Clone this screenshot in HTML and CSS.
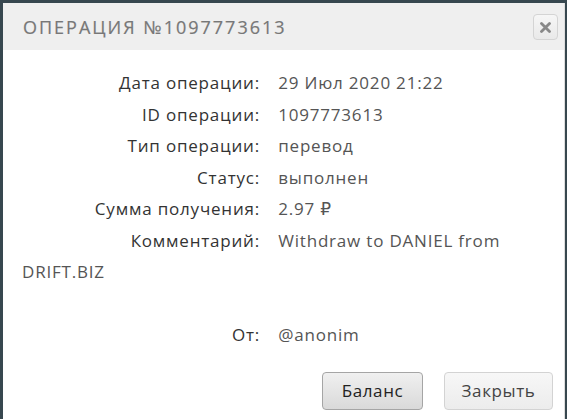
FILE: index.html
```html
<!DOCTYPE html>
<html lang="ru">
<head>
    <meta charset="UTF-8">
    <meta name="viewport" content="width=device-width, initial-scale=1.0">
    <title>Операция №1097773613</title>
    <link rel="stylesheet" href="styles.css">
</head>
<body>
    <div class="modal">
        <div class="modal-header">
            <h3 class="modal-title">Операция №1097773613</h3>
            <button class="close" type="button" aria-label="Закрыть">
                <svg width="11" height="11" viewBox="0 0 11 11">
                    <path d="M1.5 1.5 L9.5 9.5 M9.5 1.5 L1.5 9.5" stroke="#888" stroke-width="2.8" stroke-linecap="round"/>
                </svg>
            </button>
        </div>
        <div class="modal-body">
            <span class="label">Дата операции:</span> 29 Июл 2020 21:22<br>
            <span class="label">ID операции:</span> 1097773613<br>
            <span class="label">Тип операции:</span> перевод<br>
            <span class="label">Статус:</span> выполнен<br>
            <span class="label">Сумма получения:</span> 2.97 &#8381;<br>
            <span class="label">Комментарий:</span> Withdraw to DANIEL from<br>
            DRIFT.BIZ<br>
            <br>
            <span class="label">От:</span> @anonim
        </div>
        <div class="modal-footer">
            <button class="btn btn-dark" type="button">Баланс</button>
            <button class="btn" type="button">Закрыть</button>
        </div>
    </div>
</body>
</html>
```

FILE: styles.css
```css
body {
    margin: 0;
    padding: 3px 2px 0 3px;
    background-color: #37474f;
    font-family: 'Open Sans', 'DejaVu Sans', sans-serif;
    height: 100vh;
    box-sizing: border-box;
    overflow: hidden;
}

.modal {
    background-color: #fff;
    border-right: 1px solid #ddd;
    height: 100%;
}

.modal-header {
    display: flex;
    justify-content: space-between;
    align-items: center;
    height: 47px;
    padding: 0 6px 0 20px;
    background-color: #efefef;
}

.modal-title {
    margin: 0;
    font-size: 18px;
    font-weight: normal;
    letter-spacing: 2px;
    text-transform: uppercase;
    color: #777;
    -webkit-text-stroke: 0.2px #777;
}

.close {
    display: flex;
    align-items: center;
    justify-content: center;
    width: 25px;
    height: 26px;
    padding: 0;
    margin-top: 1px;
    border: 1px solid #d4d4d4;
    border-radius: 4px;
    background: linear-gradient(#f6f6f6, #e9e9e9);
    cursor: pointer;
}

.modal-body {
    padding: 17px 20px 0 19px;
    font-size: 17px;
    letter-spacing: 0.8px;
    line-height: 31.5px;
    color: #555;
}

.label {
    display: inline-block;
    width: 238px;
    margin-right: 13px;
    text-align: right;
    color: #333;
}

.modal-footer {
    display: flex;
    justify-content: flex-end;
    gap: 21px;
    padding: 21px 11px 0 0;
}

.btn {
    width: 109px;
    height: 38px;
    border: 1px solid #d3d3d3;
    border-radius: 4px;
    background: linear-gradient(#f7f7f7, #ececec);
    color: #444;
    font-family: 'Open Sans', sans-serif;
    font-size: 17px;
    letter-spacing: 0.6px;
    cursor: pointer;
}

.btn-dark {
    width: 101px;
    border-color: #a5a5a5;
    background: linear-gradient(#f0f0f0, #d9d9d9);
    color: #222;
}
```
